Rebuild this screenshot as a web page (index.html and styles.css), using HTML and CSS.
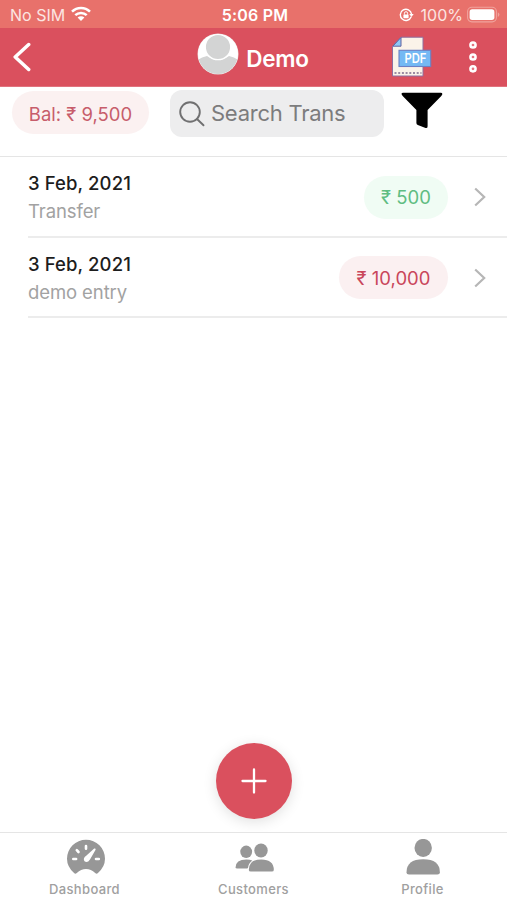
FILE: index.html
```html
<!DOCTYPE html>
<html lang="en">
<head>
<meta charset="utf-8">
<title>Demo</title>
<link rel="stylesheet" href="styles.css">
</head>
<body>
<div class="status">
  <div class="status-left"><span class="carrier">No SIM</span>
    <svg width="20" height="16" viewBox="0 0 20 16"><g fill="none" stroke="#fff" stroke-width="2.5"><path d="M1 5.7a12.8 12.8 0 0 1 18 0"/><path d="M4.3 9.2a8.2 8.2 0 0 1 11.4 0"/></g><path d="M6.6 11.5a4.9 4.9 0 0 1 6.8 0L10 15z" fill="#fff"/></svg>
  </div>
  <span class="time">5:06 PM</span>
  <div class="status-right">
    <svg class="lock" width="15" height="14" viewBox="0 0 15 14"><path d="M12.2 8.8A5.6 5.6 0 1 1 12.5 6" fill="none" stroke="#fff" stroke-width="1.4"/><path d="M10.3 6h4.4l-2.2 3z" fill="#fff"/><rect x="4.4" y="6.4" width="5.2" height="3.8" rx=".6" fill="#fff"/><path d="M5.4 6.6V5.3a1.6 1.6 0 0 1 3.2 0v1.3" fill="none" stroke="#fff"/></svg>
    <span class="percent">100%</span>
    <svg width="33" height="18" viewBox="0 0 33 18"><rect x=".6" y="1.3" width="28.8" height="14.6" rx="4.3" fill="none" stroke="#f0a39d" stroke-width="1.1"/><rect x="2.6" y="3.3" width="24.8" height="10.6" rx="2.6" fill="#fff"/><path d="M30.8 6.2q1.6.6 1.6 2.4t-1.6 2.4z" fill="#f0a39d"/></svg>
  </div>
</div>
<header class="header">
  <svg class="back" width="18" height="30" viewBox="0 0 18 30"><path d="M15.7 2.5 2.2 15l13.5 12.5" fill="none" stroke="#fff" stroke-width="3.5" stroke-linecap="round" stroke-linejoin="round"/></svg>
  <div class="who">
    <svg class="avatar" width="42" height="42" viewBox="0 0 42 42"><defs><clipPath id="face"><circle cx="21" cy="21" r="20"/></clipPath></defs><circle cx="21" cy="21" r="20.5" fill="#eadfdf"/><g clip-path="url(#face)"><path fill="#fff" d="M0 0h42v42H0z"/><path d="M0 42V27.5q4-3 10-4.5 11 8 22 0 6 1.500 10 4.500V42z" fill="#d3d4d4"/><circle cx="21" cy="14" r="12.7" fill="#d3d4d4" stroke="#fff" stroke-width="1.2"/></g></svg>
    <span class="title">Demo</span>
  </div>
  <div class="actions">
    <svg width="41" height="42" viewBox="0 0 41 42"><path d="M1.500 10.500 10 1.200h22V40H1.500z" fill="#fbf3e9" stroke="#8d6fa0" stroke-width="1"/><path d="M1.800 10.200 10 1.500v8.700z" fill="#8fc8f5" stroke="#61629f"/><path d="M3.500 37h27" stroke="#7c6a8c" stroke-width="1.600" stroke-dasharray="2 1.700"/><rect x="8" y="14.300" width="31.700" height="16.200" fill="#74b9f4" stroke="#6d80c4" stroke-width="1.100"/><text class="pdf" x="13.400" y="26.800" textLength="22" lengthAdjust="spacingAndGlyphs">PDF</text></svg>
    <svg class="dots" width="10" height="34" viewBox="0 0 10 34"><g fill="#e57480" stroke="#fff" stroke-width="2.5"><circle cx="5" cy="5" r="2.600"/><circle cx="5" cy="17" r="2.600"/><circle cx="5" cy="28.800" r="2.600"/></g></svg>
  </div>
</header>
<div class="toolbar">
  <div class="pill balance">Bal: ₹ 9,500</div>
  <div class="search">
    <svg width="26" height="26" viewBox="0 0 26 26"><g fill="none" stroke="#707071" stroke-width="1.900" stroke-linecap="round"><circle cx="11" cy="11" r="9.800"/><path d="m18 18 6.500 6.300"/></g></svg>
    <span>Search Trans</span>
  </div>
  <svg class="funnel" width="42" height="37" viewBox="0 0 42 37"><path d="M2.200.8h37.600q1.800 0 1.500 1.500-.2.8-1 1.600L26.600 18v16.200q0 2.200-2 1.800l-7.800-3q-1.400-.6-1.400-2V18L1.700 3.900Q-.9.8 2.200.8z"/></svg>
</div>
<main class="list">
  <div class="row">
    <div class="info"><div class="date">3 Feb, 2021</div><div class="note">Transfer</div></div>
    <div class="pill green">₹ 500</div>
    <svg class="chevron" width="12" height="20" viewBox="0 0 12 20"><path d="m1.200 1.500 9 8.500-9 8.500"/></svg>
  </div>
  <div class="row">
    <div class="info"><div class="date">3 Feb, 2021</div><div class="note">demo entry</div></div>
    <div class="pill red">₹ 10,000</div>
    <svg class="chevron" width="12" height="20" viewBox="0 0 12 20"><path d="m1.200 1.500 9 8.500-9 8.500"/></svg>
  </div>
</main>
<div class="add-area"><div class="add"><svg width="26" height="26" viewBox="0 0 26 26"><path d="M13 1.500v23M1.500 13h23" stroke="#fff" stroke-width="2.300" stroke-linecap="round"/></svg></div></div>
<nav class="tabs">
  <div class="tab">
    <svg width="40" height="36" viewBox="0 0 40 36"><path d="M8.300 34.300Q1 28 1 19.800a19 19 0 0 1 38 0Q39 28 31.700 34.300q-1.200.9-2.500-.2Q25 30 20 30t-9.200 4.100q-1.300 1.100-2.500.2z" fill="#979797"/><g stroke="#fff" stroke-width="2.600" stroke-linecap="round"><path d="M20 7v2.800M10.800 11.200l1.700 1.800M7.300 20h2.800M30 20h2.800"/></g><path d="m29.600 10.800-5.600 9.600q-2.700 4-5.500 1.800-2-2.800 1.700-5.400l8-7.200q1.600-.6 1.400 1.200z" fill="#fff"/></svg>
    <span>Dashboard</span>
  </div>
  <div class="tab">
    <svg width="40" height="36" viewBox="0 0 40 36"><g fill="#979797"><ellipse cx="12.200" cy="12.800" rx="5.900" ry="6.200"/><path d="M1.500 28.700q0-8.200 11-8.200 3.300 0 5.800 1.100-3.600 2.600-4.200 6.900-.2 1-1.100 1H3.200q-1.700 0-1.700-.8z"/><ellipse cx="27" cy="11.500" rx="6.700" ry="7"/><path d="M14.800 31q0-10.500 12.500-10.500T39.800 31q0 1.500-2 1.500h-21q-2 0-2-1.500z"/></g></svg>
    <span>Customers</span>
  </div>
  <div class="tab">
    <svg width="40" height="36" viewBox="0 0 40 36"><g fill="#979797"><ellipse cx="20.200" cy="8.900" rx="8.700" ry="9"/><path d="M3.500 33.500q0-13.200 16.700-13.200t16.700 13.200q0 2.100-2.500 2.100H6q-2.500 0-2.500-2.100z"/></g></svg>
    <span>Profile</span>
  </div>
</nav>
</body>
</html>
```
FILE: styles.css
```css
* { box-sizing: border-box; }
body {
  margin: 0;
  width: 507px;
  height: 900px;
  display: flex;
  flex-direction: column;
  overflow: hidden;
  background: #fff;
  font-family: Inter, "Liberation Sans", sans-serif;
}
svg { display: block; flex: none; }
span, .date, .note, .pill { white-space: nowrap; }
.status {
  height: 28px;
  flex: none;
  display: grid;
  grid-template-columns: 1fr auto 1fr;
  align-items: center;
  padding: 1px 7px 0 10px;
  background: #e8716b;
  color: #fff;
  font-size: 16px;
}
.status-left, .status-right { display: flex; align-items: center; }
.status-left { gap: 7px; }
.status-left svg { margin: 0 0 2px -1px; }
.status-right { justify-content: flex-end; }
.carrier { color: #fce5e2; }
.percent { color: #fce5e2; margin: 0 4px 0 7px; }
.time { font-weight: 600; font-size: 16px; letter-spacing: .2px; }
.header {
  height: 59px;
  flex: none;
  display: grid;
  grid-template-columns: 1fr auto 1fr;
  align-items: center;
  padding: 0 29px 0 13px;
  background: #da505e;
  border-bottom: 1px solid #e0737e;
}
.who { display: flex; align-items: center; gap: 7px; padding: 0 0 7px 15px; }
.title { color: #fff; font-weight: 600; font-size: 22.5px; letter-spacing: -.3px; padding-top: 9px; }
.actions { display: flex; justify-content: flex-end; align-items: center; gap: 36px; }
.pdf { fill: #fff; font: 600 13px Inter, sans-serif; }
.toolbar {
  height: 70px;
  flex: none;
  display: flex;
  align-items: flex-start;
  padding: 3px 12px 0;
  border-bottom: 1px solid #e5e5e5;
}
.pill {
  height: 43px;
  border-radius: 22px;
  display: flex;
  align-items: center;
  justify-content: center;
  font-size: 18.5px;
}
.balance { width: 137px; margin-top: 1px; padding-top: 2px; color: #c75d6b; background: #fbf1f1; }
.search {
  width: 214px;
  height: 47px;
  margin-left: 21px;
  display: flex;
  align-items: center;
  gap: 6px;
  padding-left: 9px;
  border-radius: 12px;
  background: #ededee;
  color: #7c7c7d;
  font-size: 22px;
  letter-spacing: -.25px;
}
.search span { padding-bottom: 2px; }
.funnel { margin: 2px 0 0 17px; }
.list { flex: 1; }
.row {
  height: 80.5px;
  margin-left: 28px;
  display: flex;
  align-items: center;
  padding: 2px 21px 0 0;
  border-bottom: 2px solid #ececec;
}
.info { flex: 1; }
.date { font-size: 18.5px; line-height: 28px; font-weight: 450; color: #1d1d1d; letter-spacing: .1px; }
.note { font-size: 18.5px; line-height: 28px; color: #a2a2a2; letter-spacing: -.1px; }
.green { width: 84px; color: #5fbd82; background: #f0fcf4; }
.red { width: 109px; color: #c9465b; background: #fbf0f1; }
.chevron { margin-left: 26px; fill: none; stroke: #b6b6b6; stroke-width: 2.2; }
.add-area { height: 89px; flex: none; display: flex; justify-content: center; }
.add {
  width: 76px;
  height: 76px;
  border-radius: 50%;
  display: flex;
  align-items: center;
  justify-content: center;
  background: #da505e;
  box-shadow: 0 3px 14px rgba(0, 0, 0, .12);
}
.tabs {
  height: 68px;
  flex: none;
  display: grid;
  grid-template-columns: repeat(3, 1fr);
  border-top: 1px solid #e5e5e5;
}
.tab { display: flex; flex-direction: column; align-items: center; gap: 5px; padding-top: 6px; }
.tab span { font-size: 13px; line-height: 18px; font-weight: 500; letter-spacing: .35px; color: #a0a0a0; }
.tab:first-child svg { transform: translateX(1px); }
```
